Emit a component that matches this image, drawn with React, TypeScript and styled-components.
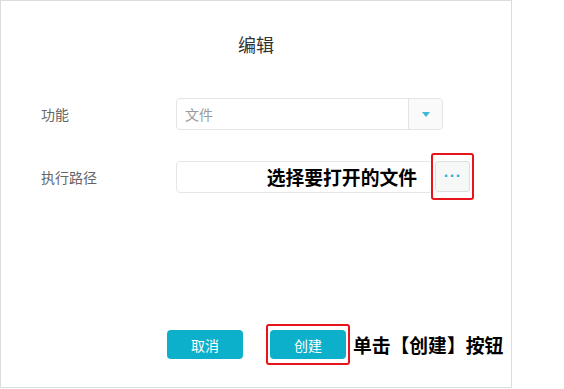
import React from "react";
import styled, { createGlobalStyle } from "styled-components";

const GlobalStyle = createGlobalStyle`
  html, body {
    margin: 0;
    padding: 0;
    background: #ffffff;
  }
  body {
    font-family: "Noto Sans CJK SC", "Noto Sans", sans-serif;
  }
`;

const Page = styled.div`
  width: 564px;
  height: 389px;
  display: flex;
  background: #fff;
`;

const Panel = styled.div`
  width: 510px;
  height: 386px;
  border: 1px solid #dcdcdc;
  display: flex;
  flex-direction: column;
`;

const Title = styled.h2`
  margin: 30px 0 0;
  font-size: 18px;
  font-weight: 400;
  line-height: 26px;
  color: #333;
  text-align: center;
`;

const Form = styled.div`
  display: flex;
  flex-direction: column;
  gap: 23px;
  margin-top: 41px;
  padding-left: 40px;
`;

const Row = styled.div`
  display: flex;
  align-items: center;
`;

const Label = styled.div`
  width: 135px;
  font-size: 14px;
  color: #666;
`;

const Select = styled.div`
  width: 267px;
  height: 32px;
  box-sizing: border-box;
  border: 1px solid #e4e4e4;
  border-radius: 4px;
  display: flex;
  align-items: stretch;
`;

const SelectValue = styled.div`
  flex: 1;
  display: flex;
  align-items: center;
  padding-left: 8px;
  font-size: 14px;
  color: #9a9a9a;
`;

const SelectArrow = styled.div`
  width: 33px;
  border-left: 1px solid #e4e4e4;
  background: #fafafa;
  border-radius: 0 4px 4px 0;
  display: flex;
  align-items: center;
  justify-content: center;

  &::after {
    content: "";
    border-left: 4px solid transparent;
    border-right: 4px solid transparent;
    border-top: 5px solid #3cb8d6;
  }
`;

const PathInput = styled.div`
  width: 257px;
  height: 32px;
  box-sizing: border-box;
  border: 1px solid #e6e6e6;
  border-radius: 4px;
  display: flex;
  align-items: center;
  justify-content: flex-end;
  padding-right: 15px;
  margin-right: -2px;
`;

const Note = styled.span`
  font-size: 18.8px;
  font-weight: 700;
  color: #000;
  white-space: nowrap;
`;

const Highlight = styled.div<{ $px: number; $py: number }>`
  border: 2px solid #e8141b;
  border-radius: 3px;
  padding: ${(p) => `${p.$py}px ${p.$px}px`};
  display: flex;
  background: #fff;
`;

const DotsButton = styled.button`
  width: 35px;
  height: 31px;
  border: 1px solid #dedede;
  border-radius: 3px;
  background: #f6f7f7;
  color: #29b3d4;
  font-size: 13px;
  font-weight: 700;
  letter-spacing: 1px;
  padding: 0 0 3px;
  font-family: "DejaVu Sans", sans-serif;
`;

const Footer = styled.div`
  margin-top: auto;
  margin-bottom: 22px;
  padding-left: 166px;
  display: flex;
  align-items: center;
  gap: 23px;
`;

const Button = styled.button`
  width: 76px;
  height: 29px;
  border: none;
  border-radius: 4px;
  background: #0db0cb;
  color: #fff;
  font-size: 14px;
  font-family: "Noto Sans CJK SC", sans-serif;
`;

const CreateGroup = styled.div`
  display: flex;
  align-items: center;
  gap: 3px;
`;

export default function App() {
  return (
    <Page>
      <GlobalStyle />
      <Panel>
        <Title>编辑</Title>
        <Form>
          <Row>
            <Label>功能</Label>
            <Select>
              <SelectValue>文件</SelectValue>
              <SelectArrow />
            </Select>
          </Row>
          <Row>
            <Label>执行路径</Label>
            <PathInput>
              <Note>选择要打开的文件</Note>
            </PathInput>
            <Highlight $px={2} $py={6}>
              <DotsButton>···</DotsButton>
            </Highlight>
          </Row>
        </Form>
        <Footer>
          <Button>取消</Button>
          <CreateGroup>
            <Highlight $px={2} $py={4}>
              <Button>创建</Button>
            </Highlight>
            <Note>单击【创建】按钮</Note>
          </CreateGroup>
        </Footer>
      </Panel>
    </Page>
  );
}
